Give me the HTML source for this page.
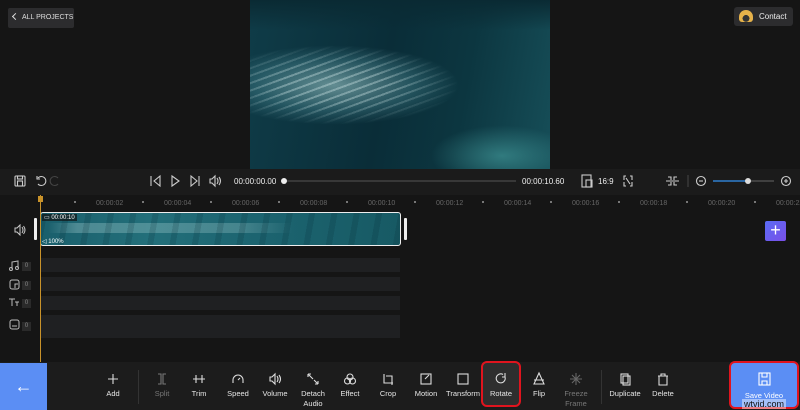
<!DOCTYPE html>
<html><head><meta charset="utf-8"><style>
*{margin:0;padding:0;box-sizing:border-box}
body{width:800px;height:410px;overflow:hidden;background:#151515;font-family:"Liberation Sans",sans-serif;color:#ddd;position:relative}
.a{position:absolute}
.lbl{position:absolute;font-size:7.5px;color:#e6e6e6;text-align:center;width:50px;line-height:10px}
.tk{position:absolute;top:200px;font-size:7px;color:#666}
.dot{position:absolute;top:201px;width:2px;height:2px;background:#777}
.tr{position:absolute;left:41px;width:359px;background:#1f2022}
.cnt{position:absolute;left:22px;width:9px;height:9px;background:#2a2a2a;color:#888;font-size:6px;text-align:center;line-height:9px}
</style></head><body>
<div class="a" style="left:8px;top:8px;width:66px;height:20px;background:#2c2c2e;border-radius:2px;font-size:7px;color:#ddd;line-height:20px;padding-left:14px">ALL PROJECTS</div>
<div class="a" style="left:13px;top:14px;width:5px;height:5px;border-left:1px solid #ddd;border-bottom:1px solid #ddd;transform:rotate(45deg)"></div>
<div class="a" style="left:734px;top:7px;width:59px;height:19px;background:#2c2c2e;border-radius:3px;font-size:8px;color:#eee;line-height:19px;padding-left:25px">Contact</div>
<div class="a" style="left:739px;top:10px;width:14px;height:12px;border-radius:7px 7px 3px 3px;background:radial-gradient(circle at 50% 70%,#333 30%,#e6b24a 32%)"></div>
<!-- video -->
<div class="a" style="left:250px;top:0;width:300px;height:169px;overflow:hidden;background:linear-gradient(100deg,#0f3c48 0%,#0a2d38 45%,#0c3640 70%,#164e58 100%)">
 <div class="a" style="left:0;top:45px;width:210px;height:80px;background:radial-gradient(ellipse at 40% 50%,rgba(170,215,215,.55),rgba(90,160,170,.3) 45%,transparent 70%)"></div>
 <div class="a" style="left:0;top:45px;width:210px;height:80px;background:repeating-linear-gradient(160deg,rgba(220,240,240,.35) 0 2px,transparent 2px 7px);-webkit-mask:radial-gradient(ellipse at 40% 50%,#000 30%,transparent 70%);mask:radial-gradient(ellipse at 40% 50%,#000 30%,transparent 70%)"></div>
 <div class="a" style="left:180px;top:125px;width:120px;height:44px;background:radial-gradient(ellipse at 60% 70%,rgba(70,160,160,.6),transparent 70%)"></div>
 <div class="a" style="left:0;top:0;width:300px;height:30px;background:linear-gradient(#0a2a33,transparent)"></div>
</div>
<div class="a" style="left:0;top:169px;width:800px;height:26px;background:#1b1b1b"></div>
<svg class="a" style="left:0;top:169px" width="800" height="26" fill="none" stroke="#ccc" stroke-width="1.1">
 <rect x="15" y="7" width="10" height="10" rx="1"/><rect x="17.5" y="7" width="5" height="3"/><rect x="17.5" y="12" width="5" height="5"/>
 <path d="M38 9 A4.5 4.5 0 1 1 38 15 M37 7 v3 h3"/>
 <path d="M58 9 A4.5 4.5 0 1 0 58 15" stroke="#444"/>
 <path d="M151 7v10 M160 7l-6 5 6 5z"/><path d="M172 7l7 5-7 5z"/><path d="M191 7l6 5-6 5z M199 7v10"/>
 <path d="M210 10h2l3-3v10l-3-3h-2z M217 9q2 3 0 6 M219 8q3 4 0 8"/>
 <line x1="286" y1="12" x2="516" y2="12" stroke="#555"/>
 <rect x="582" y="6" width="9" height="12"/><rect x="586" y="11" width="6" height="7"/>
 <path d="M626 7h-2v4 M624 13v4h2 M630 7h2v4 M632 13v4h-2 M626 9l4 6"/>
 <path d="M668 8h3v3 M677 8h-3v3 M668 16h3v-3 M677 16h-3v-3 M666 12h13"/>
 <line x1="688" y1="6" x2="688" y2="18" stroke="#444"/>
 <circle cx="701" cy="12" r="4.5"/><path d="M699 12h4"/>
 <circle cx="786" cy="12" r="4.5"/><path d="M784 12h4 M786 10v4"/>
 <line x1="713" y1="12" x2="748" y2="12" stroke="#2f80d0" stroke-width="1.5"/><line x1="748" y1="12" x2="774" y2="12" stroke="#666"/>
</svg>
<div class="a" style="left:281px;top:178px;width:6px;height:6px;border-radius:3px;background:#eee"></div>
<div class="a" style="left:745px;top:178px;width:6px;height:6px;border-radius:3px;background:#ddd"></div>
<div class="a" style="left:234px;top:177px;font-size:8px;color:#eee">00:00:00.00</div>
<div class="a" style="left:522px;top:177px;font-size:8px;color:#eee">00:00:10.60</div>
<div class="a" style="left:598px;top:177px;font-size:8px;color:#eee">16:9</div>
<div class="tk" style="left:96px">00:00:02</div><div class="tk" style="left:164px">00:00:04</div><div class="tk" style="left:232px">00:00:06</div><div class="tk" style="left:300px">00:00:08</div><div class="tk" style="left:368px">00:00:10</div><div class="tk" style="left:436px">00:00:12</div><div class="tk" style="left:504px">00:00:14</div><div class="tk" style="left:572px">00:00:16</div><div class="tk" style="left:640px">00:00:18</div><div class="tk" style="left:708px">00:00:20</div><div class="tk" style="left:776px">00:00:22</div>
<div class="dot" style="left:74px"></div><div class="dot" style="left:142px"></div><div class="dot" style="left:210px"></div><div class="dot" style="left:278px"></div><div class="dot" style="left:346px"></div><div class="dot" style="left:414px"></div><div class="dot" style="left:482px"></div><div class="dot" style="left:550px"></div><div class="dot" style="left:618px"></div><div class="dot" style="left:686px"></div><div class="dot" style="left:754px"></div>
<svg class="a" style="left:14px;top:224px" width="12" height="12" fill="none" stroke="#ccc" stroke-width="1"><path d="M1 4h2l3-3v10l-3-3h-2z M8 3q2 3 0 6 M9.5 2q3 4 0 8"/></svg>
<div class="a" style="left:34px;top:218px;width:3px;height:22px;background:#eee;border-radius:1px"></div>
<div class="a" style="left:404px;top:218px;width:3px;height:22px;background:#eee;border-radius:1px"></div>
<div class="a" style="left:40px;top:212px;width:361px;height:34px;border:1px solid #eee;border-radius:3px;background:linear-gradient(90deg,#1a5f6c,#236f7a 30%,#1c6470 60%,#175a64);overflow:hidden">
 <div class="a" style="left:0;top:10px;width:360px;height:10px;background:linear-gradient(90deg,transparent 2%,rgba(190,225,225,.3) 10%,rgba(190,225,225,.25) 55%,transparent 70%)"></div>
 <div class="a" style="left:0;top:0;width:360px;height:34px;background:repeating-linear-gradient(100deg,rgba(0,30,40,.15) 0 6px,transparent 6px 22px)"></div>
 <div class="a" style="left:1px;top:1px;font-size:6px;color:#fff;background:#111a;padding:0 2px">▭ 00:00:10</div>
 <div class="a" style="left:1px;top:25px;font-size:6px;color:#fff">◁ 100%</div>
</div>
<div class="a" style="left:40px;top:195px;width:1px;height:167px;background:#c8922a"></div>
<div class="a" style="left:38px;top:196px;width:5px;height:6px;background:#c8922a"></div>
<div class="tr" style="top:258px;height:14px"></div><div class="tr" style="top:277px;height:14px"></div><div class="tr" style="top:296px;height:14px"></div><div class="tr" style="top:315px;height:23px"></div>
<svg class="a" style="left:8px;top:259px" width="14" height="76" fill="none" stroke="#bbb" stroke-width="1">
 <path d="M4 10v-7l6-1v7"/><circle cx="3" cy="10" r="1.5"/><circle cx="9" cy="9" r="1.5"/>
 <rect x="2" y="21" width="9" height="9" rx="2"/><path d="M7 29v-4h3"/>
 <path d="M1 40h6 M4 40v7 M7 43h4 M9 43v4"/>
 <rect x="2" y="61" width="9" height="9" rx="2"/><path d="M4 67h5"/>
</svg>
<div class="cnt" style="top:262px">0</div><div class="cnt" style="top:281px">0</div><div class="cnt" style="top:299px">0</div><div class="cnt" style="top:322px">0</div>
<div class="a" style="left:765px;top:221px;width:21px;height:20px;background:linear-gradient(135deg,#5a6cf5,#7a4fe8);border-radius:2px;color:#fff;font-size:18px;text-align:center;line-height:19px">+</div>
<div class="a" style="left:0;top:362px;width:800px;height:48px;background:#1c1c1c"></div>
<div class="a" style="left:0;top:363px;width:47px;height:47px;background:#5b8ef4;color:#fff;font-size:18px;text-align:center;line-height:46px">←</div>
<div class="a" style="left:138px;top:370px;width:1px;height:34px;background:#333"></div>
<div class="a" style="left:601px;top:370px;width:1px;height:34px;background:#333"></div>
<div class="a" style="left:481px;top:361px;width:40px;height:46px;background:#2e2e2e;border:2px solid #e0141e;border-radius:6px"></div>
<div class="a" style="left:729px;top:361px;width:70px;height:48px;background:#5b8ef4;border:2px solid #e0141e;border-radius:6px"></div>
<svg class="a" style="left:0;top:370px" width="800" height="20" fill="none" stroke="#ddd" stroke-width="1.1">
 <path d="M113 4v10 M108 9h10"/>
 <path d="M158 4h3v10h-3 M166 4h-3v10h3" stroke="#777"/>
 <path d="M193 9h12 M196 5v8 M202 5v8"/>
 <path d="M233 13v-3a5 5 0 0 1 10 0v3 M238 10l2-2"/>
 <path d="M270 7h2l3-3v10l-3-3h-2z M277 6q2 3 0 6 M279 5q3 4 0 8"/>
 <path d="M308 4l5 5 M308 4h3 M308 4v3 M318 14l-4-4 M318 14h-3 M318 14v-3"/>
 <circle cx="350" cy="7" r="3"/><circle cx="347.5" cy="11" r="3"/><circle cx="352.5" cy="11" r="3"/>
 <path d="M384 4v9h9 M386 6h6v9"/>
 <rect x="421" y="4" width="10" height="10"/><path d="M425 9l4-4"/>
 <rect x="458" y="4" width="10" height="10"/>
 <path d="M505 7a4.5 4.5 0 1 1-2-2.5 M505 3v4h-3"/>
 <path d="M539 3l-5 11h10z M534 10h10"/>
 <path d="M576 3v12 M570 9h12 M572 5l8 8 M580 5l-8 8" stroke="#666"/>
 <rect x="621" y="4" width="7" height="9"/><rect x="623" y="6" width="7" height="9"/>
 <path d="M658 6h10 M661 6v-2h4v2 M659 6v9h8v-9"/>
 <rect x="759" y="3" width="11" height="12" stroke="#fff"/><path d="M762 3v4h5v-4 M762 15v-4h5v4" stroke="#fff"/>
</svg>
<div class="lbl" style="left:88px;top:389px">Add</div>
<div class="lbl" style="left:137px;top:389px;color:#777">Split</div>
<div class="lbl" style="left:174px;top:389px">Trim</div>
<div class="lbl" style="left:213px;top:389px">Speed</div>
<div class="lbl" style="left:250px;top:389px">Volume</div>
<div class="lbl" style="left:288px;top:389px">Detach<br>Audio</div>
<div class="lbl" style="left:325px;top:389px">Effect</div>
<div class="lbl" style="left:363px;top:389px">Crop</div>
<div class="lbl" style="left:401px;top:389px">Motion</div>
<div class="lbl" style="left:438px;top:389px">Transform</div>
<div class="lbl" style="left:476px;top:389px">Rotate</div>
<div class="lbl" style="left:514px;top:389px">Flip</div>
<div class="lbl" style="left:551px;top:389px;color:#777">Freeze<br>Frame</div>
<div class="lbl" style="left:600px;top:389px">Duplicate</div>
<div class="lbl" style="left:638px;top:389px">Delete</div>
<div class="lbl" style="left:739px;top:391px;color:#fff">Save Video</div>
<div class="a" style="left:742px;top:399px;font-size:9px;line-height:10px;color:#111;background:rgba(255,255,255,.45);padding:0 2px">wtvid.com</div>
</body></html>
